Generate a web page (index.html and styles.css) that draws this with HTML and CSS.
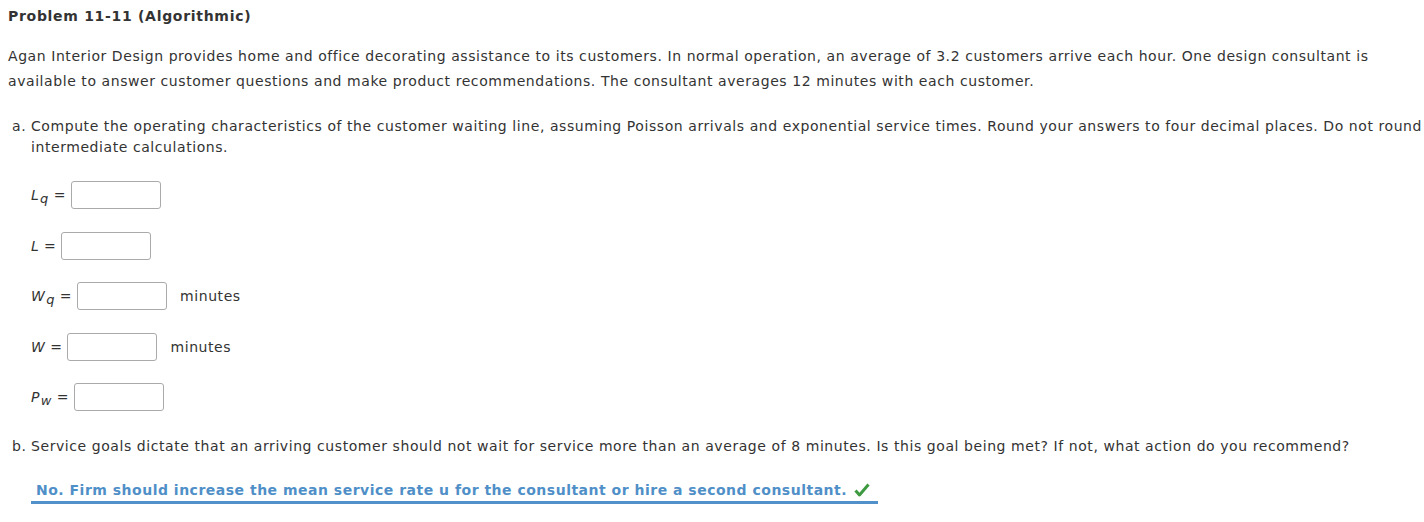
FILE: index.html
```html
<!DOCTYPE html>
<html>
<head>
<meta charset="utf-8">
<link rel="stylesheet" href="styles.css">
</head>
<body>
<div class="page">
  <h1 class="title">Problem 11-11 (Algorithmic)</h1>
  <p class="intro">Agan Interior Design provides home and office decorating assistance to its customers. In normal operation, an average of 3.2 customers arrive each hour. One design consultant is available to answer customer questions and make product recommendations. The consultant averages 12 minutes with each customer.</p>
  <div class="part">
    <span class="marker">a.</span>
    <div class="part-body">
      <p class="question">Compute the operating characteristics of the customer waiting line, assuming Poisson arrivals and exponential service times. Round your answers to four decimal places. Do not round intermediate calculations.</p>
      <div class="rows">
        <div class="row"><span class="var">L<sub>q</sub></span><span class="eq">=</span><span class="box"></span></div>
        <div class="row"><span class="var">L</span><span class="eq">=</span><span class="box"></span></div>
        <div class="row"><span class="var">W<sub>q</sub></span><span class="eq">=</span><span class="box"></span><span class="unit">minutes</span></div>
        <div class="row"><span class="var">W</span><span class="eq">=</span><span class="box"></span><span class="unit">minutes</span></div>
        <div class="row"><span class="var">P<sub>w</sub></span><span class="eq">=</span><span class="box"></span></div>
      </div>
    </div>
  </div>
  <div class="part part-b">
    <span class="marker">b.</span>
    <div class="part-body">
      <p class="question">Service goals dictate that an arriving customer should not wait for service more than an average of 8 minutes. Is this goal being met? If not, what action do you recommend?</p>
    </div>
  </div>
  <div class="answer">
    <span class="answer-text">No. Firm should increase the mean service rate u for the consultant or hire a second consultant.</span>
    <svg class="check" width="16" height="14" viewBox="0 0 16 14"><path d="M1.5 7.5 L5.5 12 L14.5 1.5" fill="none" stroke="#3d9a40" stroke-width="3" stroke-linejoin="round"/></svg>
  </div>
</div>
</body>
</html>
```
FILE: styles.css
```css
html, body {
  margin: 0;
  padding: 0;
  background: #fff;
}
body {
  font-family: "DejaVu Sans", Verdana, sans-serif;
  font-size: 14px;
  letter-spacing: 0.57px;
  color: #333;
}
.page {
  padding: 6px 0 0 8px;
  width: 1414px;
}
.title {
  margin: 0;
  font-size: 14px;
  font-weight: bold;
  letter-spacing: 0.7px;
  line-height: 20px;
  color: #333;
}
.intro {
  margin: 18px 0 0 0;
  line-height: 25px;
}
.part {
  display: flex;
  margin-top: 22px;
}
.marker {
  width: 19px;
  padding-left: 4px;
  line-height: 21px;
  flex: none;
}
.part-body {
  flex: 1;
}
.question {
  margin: 0;
  line-height: 21px;
}
.rows {
  display: flex;
  flex-direction: column;
  gap: 22.5px;
  margin-top: 23px;
}
.row {
  display: flex;
  align-items: center;
  height: 28px;
}
.var {
  font-style: italic;
  letter-spacing: 0.3px;
}
.var sub {
  font-size: 13px;
  vertical-align: -3px;
  line-height: 0;
  margin-left: 1px;
}
.eq {
  margin: 0 5px 0 5px;
}
.box {
  width: 88px;
  height: 26px;
  border: 1px solid #aaa;
  border-radius: 3px;
  background: #fff;
}
.unit {
  margin-left: 13px;
}
.part-b {
  margin-top: 25px;
}
.answer {
  margin: 22px 0 0 23px;
  width: 847px;
  border-bottom: 3px solid #5190c8;
  display: flex;
  align-items: center;
  padding-left: 5px;
  box-sizing: border-box;
  height: 25px;
}
.answer-text {
  font-weight: bold;
  letter-spacing: 0.5px;
  color: #4f8fc8;
}
.check {
  margin-left: 7px;
}
```
